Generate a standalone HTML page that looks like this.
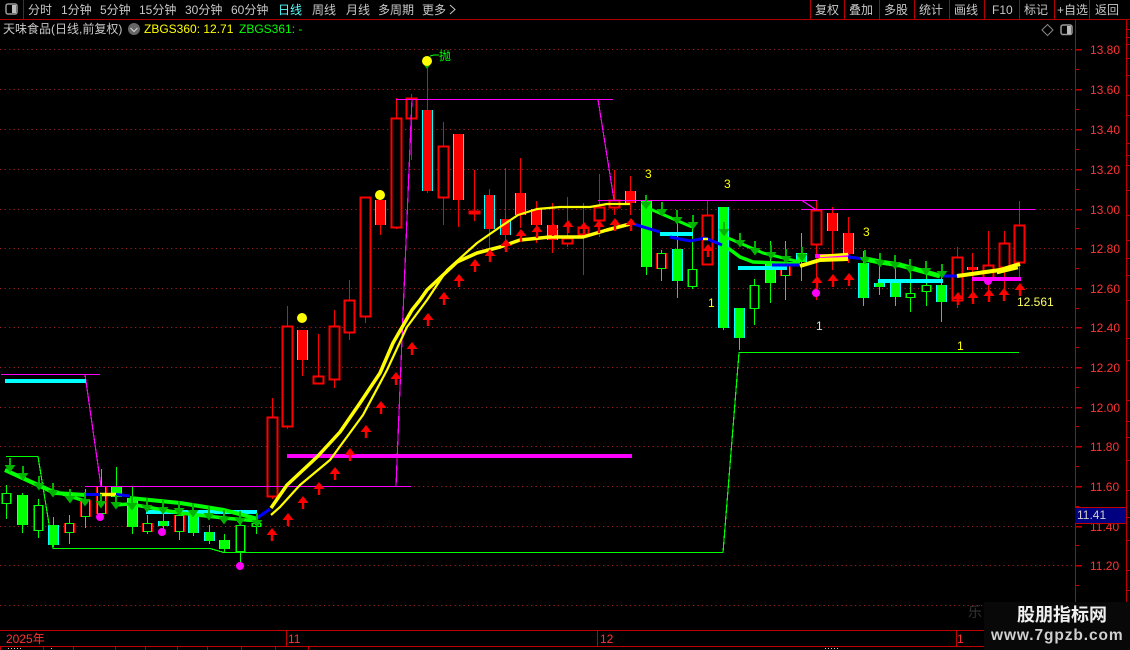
<!DOCTYPE html>
<html><head><meta charset="utf-8"><style>
html,body{margin:0;padding:0;background:#000;width:1130px;height:650px;overflow:hidden}
svg{position:absolute;left:0;top:0;display:block}
text{font-family:"Liberation Sans","Noto Sans CJK SC",sans-serif;font-size:12px}
.t{fill:#c8c8c8}
.p{fill:#ff3232}
.y{fill:#ff0}
</style></head><body>
<svg width="1130" height="650" viewBox="0 0 1130 650" xmlns="http://www.w3.org/2000/svg">
<defs>
<g id="dn"><path d="M-1-7h2V0h4.500L0 7.500-5.500 0H-1z"/></g>
<g id="up"><path d="M0 0 5.500 7H1.200v6H-1.200V7H-5.500z"/></g>
<g id="hg">
<rect x="2" y="493" width="8" height="10"/><rect x="34" y="505" width="8" height="25"/><rect x="65" y="523" width="8" height="9"/><rect x="81" y="500" width="8" height="16"/><rect x="97" y="486" width="8" height="27"/><rect x="143" y="523" width="8" height="8"/><rect x="175" y="515" width="8" height="16"/><rect x="236" y="525" width="8" height="26"/><rect x="252" y="523" width="8" height="3"/><rect x="657" y="253" width="8" height="15"/><rect x="688" y="269" width="8" height="17"/><rect x="750" y="285" width="8" height="23"/><rect x="781" y="265" width="8" height="10"/><rect x="906" y="293" width="8" height="4"/><rect x="922" y="285" width="8" height="6"/>
</g>
<g id="sgr">
<rect x="18" y="495" width="9" height="30"/><rect x="49" y="525" width="9" height="20"/><rect x="112" y="486" width="9" height="11"/><rect x="128" y="498" width="9" height="29"/><rect x="159" y="521" width="9" height="5"/><rect x="189" y="515" width="9" height="18"/><rect x="205" y="532" width="9" height="9"/><rect x="220" y="540" width="9" height="9"/><rect x="642" y="201" width="9" height="66"/><rect x="673" y="249" width="9" height="32"/><rect x="719" y="207" width="9" height="121"/><rect x="735" y="308" width="9" height="30"/><rect x="766" y="264" width="9" height="19"/><rect x="797" y="253" width="9" height="9"/><rect x="859" y="263" width="9" height="35"/><rect x="875" y="283" width="9" height="4"/><rect x="891" y="283" width="9" height="14"/><rect x="937" y="285" width="9" height="17"/>
</g>
<g id="srd">
<rect x="298" y="330" width="9" height="30"/><rect x="376" y="200" width="9" height="25"/><rect x="423" y="110" width="9" height="81"/><rect x="454" y="134" width="9" height="66"/><rect x="485" y="195" width="9" height="34"/><rect x="501" y="219" width="9" height="16"/><rect x="516" y="193" width="9" height="22"/><rect x="532" y="209" width="9" height="16"/><rect x="548" y="225" width="9" height="15"/><rect x="626" y="191" width="9" height="12"/><rect x="828" y="213" width="9" height="18"/><rect x="844" y="233" width="9" height="21"/><rect x="968" y="267" width="9" height="3"/>
</g>
</defs>

<!-- grid -->
<path d="M0 49.500H1075M0 89.500H1075M0 129.500H1075M0 169.500H1075M0 209.500H1075M0 248.500H1075M0 288.500H1075M0 327.500H1075M0 367.500H1075M0 407.500H1075M0 446.500H1075M0 486.500H1075M0 526.500H1075M0 565.500H1075M0 605.500H1075" stroke="#a02020" stroke-width="1" stroke-dasharray="1.200 3.300" fill="none"/>

<g shape-rendering="crispEdges">
<!-- wicks -->
<path transform="translate(.5,0)" stroke="#0f0" stroke-width="1.200" fill="none" d="M6 485V519M38 499V538M69 515V544M85 489V528M101 469V517M147 515V534M179 505V540M240 518V565M256 515V534M661 250V281M692 215V289M754 279V325M785 241V300M910 260V312M926 262V306M22 493V533M53 517V547M116 467V497M132 487V534M163 500V530M193 505V536M209 525V544M224 534V552M646 197V275M677 214V298M723 207V330M739 338V350M770 241V303M801 233V281M863 251V306M879 254V295M895 260V306M941 265V322"/>
<path transform="translate(.5,0)" stroke="#f00" stroke-width="1.200" fill="none" d="M272 398V499M287 306V429M318 334V384M334 310V388M349 280V340M365 197V323M396 98V229M411 94V160M443 122V225M474 170V221M567 197V247M583 203V275M599 174V237M614 170V215M707 200V265M816 200V300M957 247V308M988 231V300M1004 231V301M1019 201V280M302 330V376M380 190V235M427 60V193M458 134V227M489 189V250M505 168V251M520 158V228M536 201V243M552 203V253M630 176V215M832 207V270M848 217V263M972 253V302"/>
<!-- hollow green -->
<use href="#hg" transform="translate(-.5,.5)" fill="#000" stroke="#f00" stroke-width="1.400"/>
<use href="#hg" transform="translate(1.500,.5)" fill="none" stroke="#f00" stroke-width="1.400"/>
<use href="#hg" transform="translate(.5,.5)" fill="#000" stroke="#0f0" stroke-width="1.400"/>
<!-- hollow red -->
<g transform="translate(.5,.5)" fill="#000" stroke="#f00" stroke-width="1.600">
<rect x="267" y="417" width="10" height="79"/><rect x="282" y="326" width="10" height="100"/><rect x="313" y="376" width="10" height="7"/><rect x="329" y="326" width="10" height="53"/><rect x="344" y="300" width="10" height="32"/><rect x="360" y="197" width="10" height="119"/><rect x="391" y="118" width="10" height="109"/><rect x="406" y="98" width="10" height="20"/><rect x="438" y="146" width="10" height="51"/><rect x="469" y="211" width="10" height="2"/><rect x="562" y="238" width="10" height="5"/><rect x="578" y="227" width="10" height="7"/><rect x="594" y="207" width="10" height="13"/><rect x="609" y="200" width="10" height="7"/><rect x="702" y="215" width="10" height="49"/><rect x="811" y="210" width="10" height="34"/><rect x="952" y="257" width="10" height="43"/><rect x="983" y="265" width="10" height="14"/><rect x="999" y="243" width="10" height="24"/><rect x="1014" y="225" width="10" height="37"/>
</g>
<!-- solid -->
<use href="#sgr" transform="translate(-1,0)" fill="#0ff"/>
<use href="#sgr" transform="translate(1,0)" fill="#0ff"/>
<use href="#sgr" fill="#0f0"/>
<use href="#srd" transform="translate(-1,0)" fill="#0ff"/>
<use href="#srd" transform="translate(1,0)" fill="#0ff"/>
<use href="#srd" fill="#f00"/>
</g>

<!-- thin magenta / green overlays -->
<g fill="none" stroke-width="1.200" shape-rendering="crispEdges">
<path stroke="#f0f" d="M1 374.500H100M85 374.500 101 486.500M85 486.500H411M396 486.500 404 290 412 99M396 99.500H613M598 99.500 614 200M598 200.500H817M802 200.500 815 209M801 209.500H1035"/>
<path stroke="#0f0" d="M6 456.500H38L53 548.500H210L224 552.500H723L739 352.500H1019"/>
</g>

<!-- thick bars -->
<g shape-rendering="crispEdges">
<rect x="5" y="379" width="81" height="4" fill="#0ff"/>
<rect x="146" y="510" width="111" height="4" fill="#0ff"/>
<rect x="660" y="232" width="33" height="4" fill="#0ff"/>
<rect x="738" y="266" width="49" height="4" fill="#0ff"/>
<rect x="878" y="279" width="65" height="4" fill="#0ff"/>
<rect x="287" y="454" width="345" height="4" fill="#f0f"/>
<rect x="815" y="254" width="34" height="4" fill="#f0f"/>
<rect x="972" y="277" width="49" height="4" fill="#f0f"/>
</g>

<!-- green MA lines -->
<g fill="none" stroke="#0f0" stroke-linejoin="round">
<path stroke-width="4" d="M5 470 55 493 85 495M130 498 180 503 224 510 258 519"/>
<path stroke-width="3.500" d="M5 470 50 490 85 501M115 505 130 504 180 513 224 518 258 521"/>
<path stroke-width="3" d="M650 209 692 227M728 238 763 253 800 262"/>
<path stroke-width="3.500" d="M728 248 740 257 753 262 800 264"/>
<path stroke-width="5" d="M865 259 880 262 900 265 940 276"/>
</g>

<!-- blue segments -->
<g fill="none" stroke="#00f" stroke-width="3">
<path d="M85 494.500H100M116 494.500 130 496"/>
<path d="M257 518 270 509"/>
<path d="M630 223 660 232M670 237 690 241 705 238 722 245M772 265H800M848 257 865 259M942 276H957"/>
</g>

<!-- yellow lines -->
<g fill="none" stroke="#ff0" stroke-linejoin="round">
<path stroke-width="3.500" d="M271 508 287 485 317 457 340 432 360 403 380 373 393 343 412 310 420 300 427 290 457 262 477 253 500 247 520 240 550 237 583 237 607 230 630 224"/>
<path stroke-width="2.200" d="M271 515 280 507 300 485 330 460 363 415 387 370 407 327 427 300 447 270 477 243 500 227 518 215 537 209 560 207 590 207 607 204 630 204"/>
<path stroke-width="4" d="M800 266 820 260 848 259"/>
<path stroke-width="2.500" d="M820 256 848 254"/>
<path stroke-width="4" d="M957 276 1000 270 1020 264"/>
<path stroke-width="2.500" d="M997 273 1018 268"/>
<path stroke-width="3.500" d="M100 494.500H116"/>
<path stroke-width="2.500" d="M703 239H708"/>
</g>

<!-- green down arrows -->
<g fill="#00b400">
<use href="#dn" x="10" y="465"/><use href="#dn" x="23" y="473"/><use href="#dn" x="39" y="483"/><use href="#dn" x="53" y="490"/><use href="#dn" x="70" y="496"/><use href="#dn" x="85" y="499"/><use href="#dn" x="101" y="501"/><use href="#dn" x="116" y="502"/><use href="#dn" x="132" y="503"/><use href="#dn" x="147" y="505"/><use href="#dn" x="163" y="507"/><use href="#dn" x="179" y="508"/><use href="#dn" x="193" y="510"/><use href="#dn" x="209" y="513"/><use href="#dn" x="224" y="517"/><use href="#dn" x="240" y="518"/><use href="#dn" x="257" y="520"/>
<use href="#dn" x="646" y="202"/><use href="#dn" x="662" y="209"/><use href="#dn" x="677" y="217"/><use href="#dn" x="693" y="222"/><use href="#dn" x="724" y="229"/><use href="#dn" x="740" y="240"/><use href="#dn" x="755" y="248"/><use href="#dn" x="771" y="252"/><use href="#dn" x="786" y="256"/><use href="#dn" x="802" y="254"/>
<use href="#dn" x="865" y="257"/><use href="#dn" x="880" y="260"/><use href="#dn" x="895" y="262"/><use href="#dn" x="910" y="266"/><use href="#dn" x="926" y="268"/><use href="#dn" x="942" y="271"/>
</g>

<!-- red up arrows -->
<g fill="#f00">
<use href="#up" x="272" y="528"/><use href="#up" x="288" y="513"/><use href="#up" x="303" y="496"/><use href="#up" x="319" y="482"/><use href="#up" x="335" y="467"/><use href="#up" x="350" y="448"/><use href="#up" x="366" y="425"/><use href="#up" x="381" y="401"/><use href="#up" x="396" y="372"/><use href="#up" x="412" y="342"/><use href="#up" x="428" y="313"/><use href="#up" x="444" y="292"/>
<use href="#up" x="459" y="274"/><use href="#up" x="475" y="259"/><use href="#up" x="490" y="249"/><use href="#up" x="506" y="239"/><use href="#up" x="521" y="229"/><use href="#up" x="537" y="225"/><use href="#up" x="553" y="223"/><use href="#up" x="568" y="220"/><use href="#up" x="584" y="222"/><use href="#up" x="599" y="220"/><use href="#up" x="615" y="218"/><use href="#up" x="631" y="218"/>
<use href="#up" x="708" y="244"/><use href="#up" x="817" y="276"/><use href="#up" x="833" y="274"/><use href="#up" x="849" y="273"/><use href="#up" x="958" y="292"/><use href="#up" x="973" y="291"/><use href="#up" x="989" y="289"/><use href="#up" x="1004" y="288"/><use href="#up" x="1020" y="283"/>
</g>

<!-- dots -->
<g fill="#f0f"><circle cx="100" cy="517" r="4"/><circle cx="162" cy="532" r="4"/><circle cx="240" cy="566" r="4"/><circle cx="816" cy="293" r="4"/><circle cx="988" cy="281" r="4"/></g>
<path d="M424 65h6l-3 4z" fill="#00b400"/>
<g fill="#ff0"><circle cx="302" cy="318" r="5"/><circle cx="380" cy="195" r="5"/><circle cx="427" cy="61" r="5"/></g>
<path d="M430 56 434 55H439" stroke="#0f0" fill="none"/>
<text x="439" y="60" fill="#0f0" font-size="12">抛</text>

<!-- chart labels -->
<g class="y">
<text x="645" y="178" fill="#ff0">3</text><text x="724" y="188" fill="#ff0">3</text><text x="863" y="236" fill="#ff0">3</text>
<text x="708" y="307" fill="#ff0">1</text><text x="816" y="330" fill="#ddd">1</text><text x="957" y="350" fill="#ff0">1</text>
<text x="1017" y="306" fill="#ffff60">12.561</text>
</g>

<!-- axis -->
<g shape-rendering="crispEdges" fill="none" stroke="#c00000">
<path d="M1075.500 19V630M1126.500 19V630"/>
<path stroke-width="1.500" d="M1075 49.500H1082M1075 89.500H1082M1075 129.500H1082M1075 169.500H1082M1075 209.500H1082M1075 248.500H1082M1075 288.500H1082M1075 327.500H1082M1075 367.500H1082M1075 407.500H1082M1075 446.500H1082M1075 486.500H1082M1075 526.500H1082M1075 565.500H1082"/>
<path d="M1075 69.500H1079M1075 109.500H1079M1075 149.500H1079M1075 189.500H1079M1075 228.500H1079M1075 268.500H1079M1075 308.500H1079M1075 347.500H1079M1075 387.500H1079M1075 426.500H1079M1075 466.500H1079M1075 506.500H1079M1075 545.500H1079M1075 585.500H1079"/>
<path d="M1127 29.500H1130M1127 37.500H1130M1127 44.500H1130M1127 58.500H1130M1127 75.500H1130M1127 95.500H1130M1127 115.500H1130M1127 143.500H1130M1127 155.500H1130M1127 165.500H1130M1127 190.500H1130M1127 215.500H1130M1127 240.500H1130M1127 258.500H1130M1127 275.500H1130M1127 300.500H1130M1127 338.500H1130M1127 360.500H1130M1127 400.500H1130M1127 421.500H1130M1127 437.500H1130M1127 460.500H1130M1127 490.500H1130M1127 517.500H1130M1127 540.500H1130M1127 570.500H1130M1127 590.500H1130"/>
</g>
<g class="p">
<text x="1090" y="54">13.80</text><text x="1090" y="94">13.60</text><text x="1090" y="134">13.40</text><text x="1090" y="174">13.20</text><text x="1090" y="214">13.00</text><text x="1090" y="253">12.80</text><text x="1090" y="293">12.60</text><text x="1090" y="332">12.40</text><text x="1090" y="372">12.20</text><text x="1090" y="412">12.00</text><text x="1090" y="451">11.80</text><text x="1090" y="491">11.60</text><text x="1090" y="531">11.40</text><text x="1090" y="570">11.20</text>
</g>
<rect x="1075" y="507" width="51" height="16" fill="#000080"/>
<path d="M1075 507.500H1127M1075 523.500H1127" stroke="#c00000" shape-rendering="crispEdges"/>
<text x="1077" y="519" fill="#d0d0d0">11.41</text>

<!-- toolbar -->
<rect x="0" y="0" width="1130" height="19" fill="#000"/>
<path d="M0 19.500H1130M23.500 0V19M810.500 0V19M844.500 0V19M879.500 0V19M914.500 0V19M949.500 0V19M984.500 0V19M1019.500 0V19M1054.500 0V19M1089.500 0V19" stroke="#b00000" shape-rendering="crispEdges"/>
<rect x="6" y="4" width="11" height="10" rx="2" fill="none" stroke="#999" stroke-width="1.500"/><rect x="12" y="5" width="4" height="8" fill="#bbb"/>
<g class="t">
<text x="28" y="14">分时</text><text x="61" y="14">1分钟</text><text x="100" y="14">5分钟</text><text x="139" y="14">15分钟</text><text x="185" y="14">30分钟</text><text x="231" y="14">60分钟</text>
<text x="278" y="14" style="fill:#5ff">日线</text>
<text x="312" y="14">周线</text><text x="346" y="14">月线</text><text x="378" y="14">多周期</text><text x="422" y="14">更多</text>
<text x="815" y="14">复权</text><text x="849" y="14">叠加</text><text x="884" y="14">多股</text><text x="919" y="14">统计</text><text x="954" y="14">画线</text><text x="992" y="14">F10</text><text x="1024" y="14">标记</text><text x="1057" y="14">+自选</text><text x="1095" y="14">返回</text>
</g>
<path d="M450 5 455 9.500 450 14" stroke="#c8c8c8" fill="none"/>

<!-- second row -->
<text x="3" y="33" fill="#c8c8c8">天味食品(日线,前复权)</text>
<circle cx="134" cy="29" r="6" fill="#666"/><path d="M130.500 28 134 31.500 137.500 28" stroke="#ccc" fill="none" stroke-width="1.200"/>
<text x="144" y="33" fill="#ff0">ZBGS360: 12.71</text>
<text x="239" y="33" fill="#0f0">ZBGS361: -</text>
<path d="M1047.500 24.500 1053 30 1047.500 35.500 1042 30z" stroke="#888" fill="none"/>
<rect x="1061" y="25" width="11" height="9.500" rx="2" fill="none" stroke="#999" stroke-width="1.500"/><rect x="1067" y="26" width="4" height="8" fill="#bbb"/>

<!-- bottom axis -->
<rect x="0" y="630" width="1130" height="20" fill="#000"/>
<path d="M0 630.500H1075M0 646.500H1075M286.500 630V646M597.500 630V646M956.500 630V646M.5 646V650M43.500 646V650M73.500 646V650M115.500 646V650M145.500 646V650M177.500 646V650M207.500 646V650M241.500 646V650M275.500 646V650M308.500 646V650" stroke="#c00000" shape-rendering="crispEdges"/>
<path d="M8 648.500H22M51 648.500H53M825 648.500H840" stroke="#ccc" stroke-dasharray="1 2" shape-rendering="crispEdges"/>
<text x="6" y="643" class="p">2025年</text><text x="288" y="643" class="p">11</text><text x="600" y="643" class="p">12</text><text x="957" y="643" class="p">1</text>

<!-- watermark -->
<rect x="984" y="602" width="146" height="48" fill="#080808"/>
<text x="968" y="617" fill="#333" style="font-size:14px">乐</text>
<text x="1017" y="621" fill="#f0f0f0" style="font-size:18px;font-weight:bold">股朋指标网</text>
<text x="991" y="640" fill="#d0d0d0" style="font-size:15.500px;font-weight:bold;letter-spacing:.9px">www.7gpzb.com</text>
</svg>
</body></html>
